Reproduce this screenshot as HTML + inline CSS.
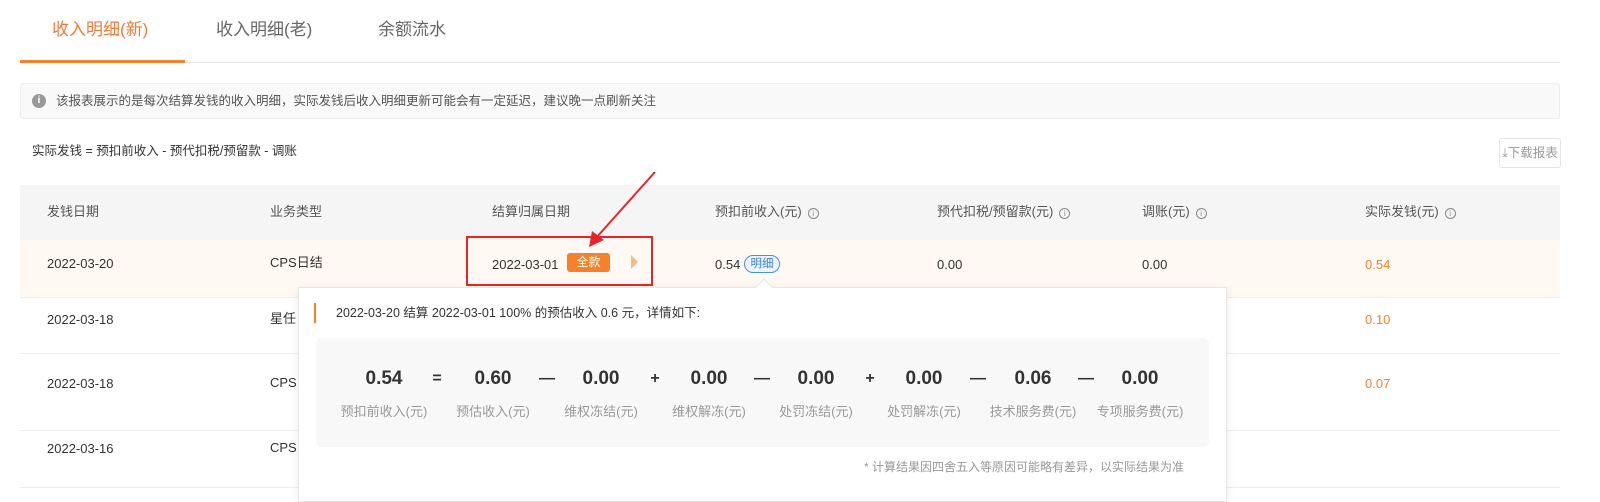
<!DOCTYPE html>
<html><head><meta charset="utf-8"><style>
*{margin:0;padding:0;box-sizing:border-box}
body{width:1600px;height:497px;overflow:hidden;background:#fff;font-family:"Liberation Sans","Noto Sans CJK SC",sans-serif;color:#333;position:relative;font-size:13px}
.a{position:absolute;white-space:nowrap;line-height:16px}
.tab{font-size:17px;color:#666;top:20px;line-height:20px}
.ic{display:inline-block;width:11px;height:11px;border:1px solid #888;border-radius:50%;font-size:8px;line-height:9px;text-align:center;color:#888;margin-left:6px;vertical-align:0px}
.hd{top:204px;color:#555}
.num{font-size:19px;font-weight:bold;color:#333;top:369px;width:100px;text-align:center;line-height:20px}
.lb{font-size:13px;color:#999;top:404px;width:110px;text-align:center}
.op{font-size:16px;font-weight:bold;color:#333;top:369px;width:20px;text-align:center;line-height:20px}
.or{color:#f5822a}
</style></head><body>
<div class="a tab" style="left:52px;color:#f07a3c">收入明细(新)</div>
<div class="a tab" style="left:216px">收入明细(老)</div>
<div class="a tab" style="left:378px">余额流水</div>
<div class="a" style="left:20px;top:62px;width:1540px;height:1px;background:#e6e6e6"></div>
<div class="a" style="left:20px;top:60px;width:165px;height:3px;background:#f5822a"></div>

<div class="a" style="left:20px;top:83px;width:1540px;height:36px;background:#f9f9f9;border:1px solid #eee;border-radius:3px"></div>
<div class="a" style="left:32px;top:94px;width:14px;height:14px;border-radius:50%;background:#999;color:#fff;font-size:10px;line-height:14px;text-align:center;font-weight:bold">i</div>
<div class="a" style="left:56px;top:93px;color:#555;font-size:12.5px">该报表展示的是每次结算发钱的收入明细，实际发钱后收入明细更新可能会有一定延迟，建议晚一点刷新关注</div>
<div class="a" style="left:32px;top:143px;font-size:12.5px">实际发钱 = 预扣前收入 - 预代扣税/预留款 - 调账</div>
<div class="a" style="left:1499px;top:138px;width:62px;height:30px;border:1px solid #e5e5e5;border-radius:3px;color:#999;font-size:12.5px;line-height:28px;text-align:center">⤓下载报表</div>

<div class="a" style="left:20px;top:185px;width:1540px;height:55px;background:#f5f5f5"></div>
<div class="a" style="left:20px;top:240px;width:1540px;height:57px;background:#fff8f3"></div>
<div class="a" style="left:20px;top:297px;width:1540px;height:1px;background:#eee"></div>
<div class="a" style="left:20px;top:353px;width:1540px;height:1px;background:#eee"></div>
<div class="a" style="left:20px;top:430px;width:1540px;height:1px;background:#eee"></div>
<div class="a" style="left:20px;top:487px;width:1540px;height:1px;background:#eee"></div>

<div class="a hd" style="left:47px">发钱日期</div>
<div class="a hd" style="left:270px">业务类型</div>
<div class="a hd" style="left:492px">结算归属日期</div>
<div class="a hd" style="left:715px">预扣前收入(元)<span class="ic">i</span></div>
<div class="a hd" style="left:937px">预代扣税/预留款(元)<span class="ic">i</span></div>
<div class="a hd" style="left:1142px">调账(元)<span class="ic">i</span></div>
<div class="a hd" style="left:1365px">实际发钱(元)<span class="ic">i</span></div>

<div class="a" style="left:47px;top:256px">2022-03-20</div>
<div class="a" style="left:270px;top:255px">CPS日结</div>
<div class="a" style="left:492px;top:257px">2022-03-01</div>
<div class="a" style="left:567px;top:253px;width:43px;height:19px;background:#f5822a;color:#fff;border-radius:3px;text-align:center;line-height:19px;font-size:12px">全款</div>
<div class="a" style="left:631px;top:255px;width:0;height:0;border-top:7px solid transparent;border-bottom:7px solid transparent;border-left:7px solid #f8b98a"></div>
<div class="a" style="left:715px;top:257px">0.54</div>
<div class="a" style="left:744px;top:255px;width:36px;height:18px;border:1px solid #4a8ee8;border-radius:9px;color:#3a7ee0;font-size:11.5px;line-height:16px;text-align:center;background:#eef5ff">明细</div>
<div class="a" style="left:937px;top:257px">0.00</div>
<div class="a" style="left:1142px;top:257px">0.00</div>
<div class="a or" style="left:1365px;top:257px">0.54</div>

<div class="a" style="left:47px;top:312px">2022-03-18</div>
<div class="a" style="left:270px;top:311px">星任</div>
<div class="a or" style="left:1365px;top:312px">0.10</div>
<div class="a" style="left:47px;top:376px">2022-03-18</div>
<div class="a" style="left:270px;top:375px">CPS</div>
<div class="a or" style="left:1365px;top:376px">0.07</div>
<div class="a" style="left:47px;top:441px">2022-03-16</div>
<div class="a" style="left:270px;top:440px">CPS</div>

<div class="a" style="left:466px;top:236px;width:187px;height:50px;border:2px solid #e8262a"></div>
<svg class="a" style="left:580px;top:168px" width="80" height="85"><line x1="75" y1="4" x2="16" y2="70" stroke="#e8262a" stroke-width="2"/><polygon points="9,79 12,63 24,72" fill="#e8262a"/></svg>

<div class="a" style="left:298px;top:287px;width:929px;height:215px;background:#fff;border:1px solid #e8e8e8;box-shadow:0 2px 8px rgba(0,0,0,.08)"></div>
<div class="a" style="left:758px;top:281px;width:12px;height:12px;background:#fff;border-left:1px solid #e8e8e8;border-top:1px solid #e8e8e8;transform:rotate(45deg)"></div>
<div class="a" style="left:314px;top:303px;width:2px;height:20px;background:#f5822a"></div>
<div class="a" style="left:336px;top:305px;font-size:12.5px">2022-03-20 结算 2022-03-01 100% 的预估收入 0.6 元，详情如下:</div>
<div class="a" style="left:316px;top:338px;width:893px;height:109px;background:#f8f8f8;border-radius:6px"></div>
<div class="a num" style="left:334px">0.54</div><div class="a lb" style="left:329px">预扣前收入(元)</div>
<div class="a op" style="left:427px">=</div>
<div class="a num" style="left:443px">0.60</div><div class="a lb" style="left:438px">预估收入(元)</div>
<div class="a op" style="left:537px">—</div>
<div class="a num" style="left:551px">0.00</div><div class="a lb" style="left:546px">维权冻结(元)</div>
<div class="a op" style="left:645px">+</div>
<div class="a num" style="left:659px">0.00</div><div class="a lb" style="left:654px">维权解冻(元)</div>
<div class="a op" style="left:752px">—</div>
<div class="a num" style="left:766px">0.00</div><div class="a lb" style="left:761px">处罚冻结(元)</div>
<div class="a op" style="left:860px">+</div>
<div class="a num" style="left:874px">0.00</div><div class="a lb" style="left:869px">处罚解冻(元)</div>
<div class="a op" style="left:968px">—</div>
<div class="a num" style="left:983px">0.06</div><div class="a lb" style="left:978px">技术服务费(元)</div>
<div class="a op" style="left:1076px">—</div>
<div class="a num" style="left:1090px">0.00</div><div class="a lb" style="left:1085px">专项服务费(元)</div>
<div class="a" style="left:864px;top:459px;font-size:12px;color:#999">* 计算结果因四舍五入等原因可能略有差异，以实际结果为准</div>
</body></html>
